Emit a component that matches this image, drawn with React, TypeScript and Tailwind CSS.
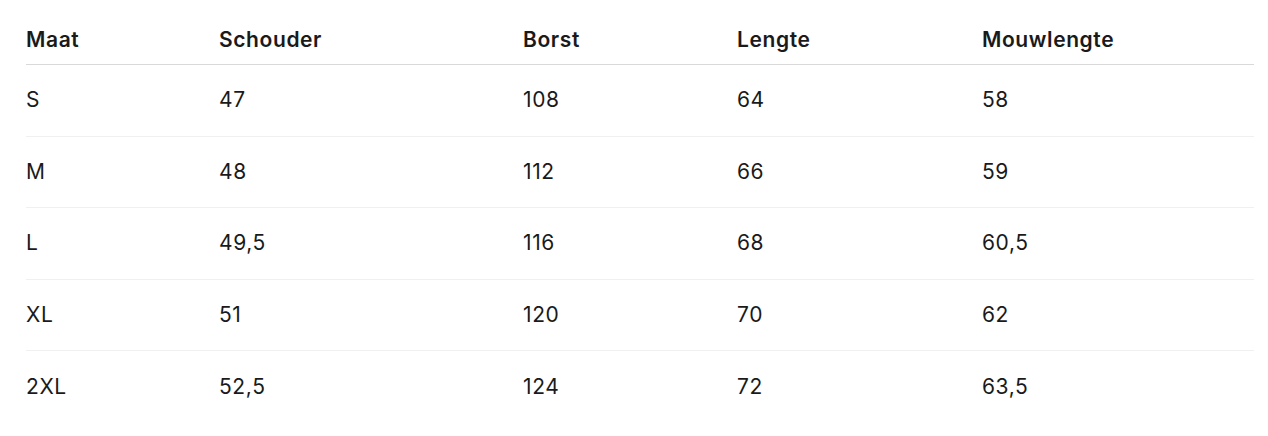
const headers = ['Maat', 'Schouder', 'Borst', 'Lengte', 'Mouwlengte'];

const rows = [
  ['S', '47', '108', '64', '58'],
  ['M', '48', '112', '66', '59'],
  ['L', '49,5', '116', '68', '60,5'],
  ['XL', '51', '120', '70', '62'],
  ['2XL', '52,5', '124', '72', '63,5'],
];

const widths = ['w-[193px]', 'w-[304px]', 'w-[214px]', 'w-[245px]', 'w-[272px]'];

export default function App() {
  return (
    <div className="min-h-screen bg-white pt-4 pl-[26px] pr-[14px] text-[#1a1a1a] font-['Inter','Liberation_Sans',sans-serif]">
      <table className="w-[1228px] table-fixed border-collapse text-left text-[21px] tracking-[0.6px]">
        <thead>
          <tr className="border-b border-[#d9d9d9]">
            {headers.map((h, i) => (
              <th key={h} className={`${widths[i]} py-3 font-semibold leading-6 p-0`}>
                {h}
              </th>
            ))}
          </tr>
        </thead>
        <tbody>
          {rows.map((row, r) => (
            <tr key={row[0]} className={r < rows.length - 1 ? 'border-b border-[#f0f0f0]' : ''}>
              {row.map((cell, i) => (
                <td key={i} className="h-[71.5px] p-0 align-middle font-normal leading-6">
                  {cell}
                </td>
              ))}
            </tr>
          ))}
        </tbody>
      </table>
    </div>
  );
}
